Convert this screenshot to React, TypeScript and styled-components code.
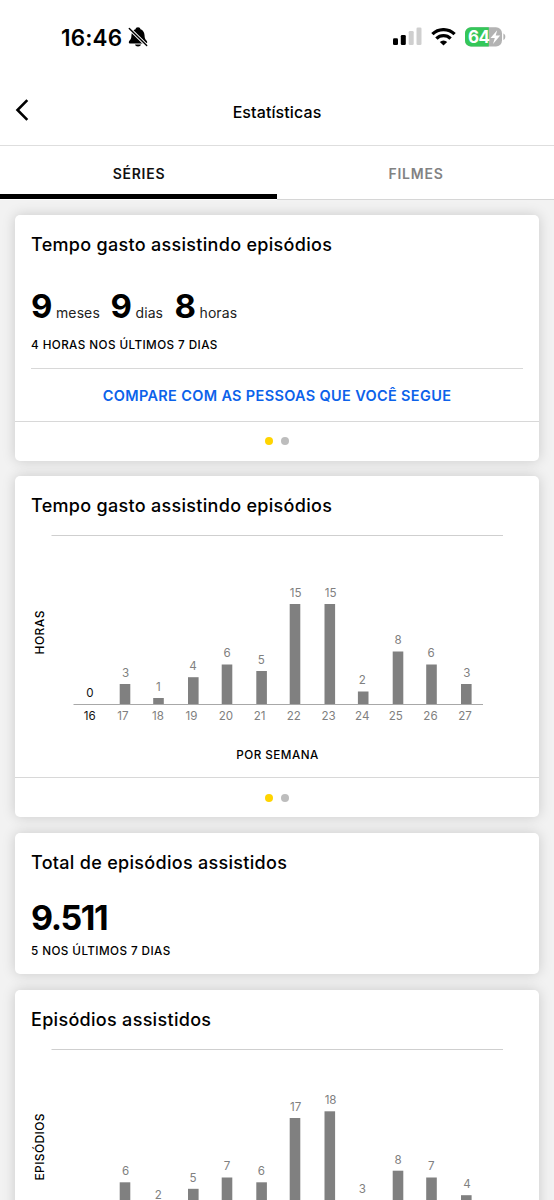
import React from "react";
import styled, { createGlobalStyle } from "styled-components";

const GlobalStyle = createGlobalStyle`
  * { box-sizing: border-box; }
  html, body { margin: 0; padding: 0; background: #fff; }
  body { font-family: Inter, "Liberation Sans", sans-serif; color: #000; }
`;

const Screen = styled.div`
  width: 554px;
  height: 1200px;
  overflow: hidden;
  display: flex;
  flex-direction: column;
  background: #f2f2f2;
`;

const StatusBar = styled.div`
  flex: none;
  height: 78px;
  padding: 0 48px 4px 61px;
  display: flex;
  align-items: center;
  background: #fff;
`;

const Clock = styled.span`
  width: 67px;
  padding-top: 2px;
  font-size: 22.5px;
  font-weight: 600;
  letter-spacing: 0.15px;
  line-height: 30px;
`;

const StatusIcons = styled.div`
  margin-left: auto;
  display: flex;
  align-items: center;
`;

const NavBar = styled.header`
  flex: none;
  height: 68px;
  display: grid;
  grid-template-columns: 60px 1fr 60px;
  align-items: center;
  background: #fff;
  border-bottom: 1px solid #dedede;
`;

const BackButton = styled.button`
  border: 0;
  padding: 0 0 3px 14px;
  background: none;
  display: flex;
`;

const NavTitle = styled.h1`
  margin: 0;
  text-align: center;
  font-size: 16px;
  font-weight: 500;
  letter-spacing: 0.1px;
  line-height: 22px;
`;

const Tabs = styled.nav`
  flex: none;
  height: 54px;
  display: grid;
  grid-template-columns: 1fr 1fr;
  background: #fff;
`;

const Tab = styled.button<{ $active?: boolean }>`
  margin-bottom: ${(p) => (p.$active ? "1px" : "0")};
  border: 0;
  border-bottom: ${(p) => (p.$active ? "5px solid #000" : "1px solid #d6d6d6")};
  padding: ${(p) => (p.$active ? "8px 0 0 1px" : "3px 0 0 1px")};
  background: none;
  font: 600 14px/20px Inter, sans-serif;
  letter-spacing: 0.75px;
  color: ${(p) => (p.$active ? "#111" : "#828282")};
`;

const Feed = styled.main`
  display: flex;
  flex-direction: column;
  gap: 15.5px;
  padding: 15px 15px 0;
`;

const Card = styled.section<{ $height: number }>`
  flex: none;
  height: ${(p) => p.$height}px;
  display: flex;
  flex-direction: column;
  background: #fff;
  border-radius: 5px;
  box-shadow: 0 0 13px rgba(0, 0, 0, 0.17);
`;

const CardTitle = styled.h2`
  flex: none;
  margin: 0;
  padding: 18px 16px 0;
  font-size: 18px;
  font-weight: 500;
  letter-spacing: 0.3px;
  line-height: 24px;
`;

const Totals = styled.div`
  display: flex;
  align-items: baseline;
  padding: 28px 16px 0;
  height: 78px;
`;

const Amount = styled.span`
  width: 20px;
  font-size: 33px;
  font-weight: 700;
  letter-spacing: -1.5px;
  line-height: 42px;
`;

const Unit = styled.span<{ $width: number }>`
  width: ${(p) => p.$width}px;
  padding-left: 5px;
  font-size: 14px;
  letter-spacing: 0.1px;
  color: #222;
`;

const Total = styled.div`
  padding: 21px 16px 1px;
  font-size: 34px;
  font-weight: 700;
  letter-spacing: -1.4px;
  line-height: 44px;
`;

const Recent = styled.div`
  padding: 0 16px;
  font-size: 11.7px;
  font-weight: 500;
  letter-spacing: 0.42px;
  line-height: 20px;
`;

const CompareLink = styled.a`
  margin: 13px 16px 0;
  height: 53px;
  border-top: 1px solid #d8d8d8;
  text-align: center;
  font-size: 14.5px;
  font-weight: 600;
  letter-spacing: 0.33px;
  line-height: 54px;
  color: #0c62ea;
`;

const Pager = styled.div`
  flex: none;
  height: 40px;
  margin-top: auto;
  border-top: 1px solid #d8d8d8;
  display: flex;
  justify-content: center;
  align-items: center;
  gap: 8px;
`;

const Dot = styled.i<{ $active?: boolean }>`
  width: 8px;
  height: 8px;
  border-radius: 50%;
  background: ${(p) => (p.$active ? "#ffd400" : "#bdbdbd")};
`;

const ChartSvg = styled.svg`
  flex: none;
  display: block;
  margin-top: 6px;
  font-family: Inter, sans-serif;
`;

type Bar = { week: number; value: number; height: number };

const columns = [74.8, 110, 143.5, 178.3, 212, 246.6, 280, 314.8, 348.2, 383, 416.5, 451.3];
const valueOffset = [0.2, 0.7, -0.2, -0.3, 0, -0.3, 0.6, 0.8, -0.8, 0, -0.3, 0.6];
const weekOffset = [0, -2, -0.5, -1.8, -1, -2, -1.2, -1.3, -1, -2.2, -1, -1.3];

const hours: Bar[] = [
  { week: 16, value: 0, height: 0 },
  { week: 17, value: 3, height: 20.5 },
  { week: 18, value: 1, height: 6.5 },
  { week: 19, value: 4, height: 27.3 },
  { week: 20, value: 6, height: 40 },
  { week: 21, value: 5, height: 33.5 },
  { week: 22, value: 15, height: 100.5 },
  { week: 23, value: 15, height: 100.5 },
  { week: 24, value: 2, height: 13 },
  { week: 25, value: 8, height: 53 },
  { week: 26, value: 6, height: 40 },
  { week: 27, value: 3, height: 20.5 },
];

const episodes: Bar[] = [
  { week: 17, value: 6, height: 36.2 },
  { week: 18, value: 2, height: 12 },
  { week: 19, value: 5, height: 29.7 },
  { week: 20, value: 7, height: 41 },
  { week: 21, value: 6, height: 36.2 },
  { week: 22, value: 17, height: 100.5 },
  { week: 23, value: 18, height: 107.2 },
  { week: 24, value: 3, height: 18 },
  { week: 25, value: 8, height: 47.8 },
  { week: 26, value: 7, height: 41 },
  { week: 27, value: 4, height: 23.3 },
];

type ChartProps = {
  bars: Bar[];
  axis: string;
  axisLength: number;
  axisCenter: number;
  caption?: string;
};

function Chart({ bars, axis, axisLength, axisCenter, caption }: ChartProps) {
  const base = 180.5;
  return (
    <ChartSvg width="523" height="253" viewBox="0 0 523 253">
      <path d="M36.500 11.500H488" stroke="#cfcfcf" />
      <text
        transform={`translate(29 ${axisCenter}) rotate(-90)`}
        textAnchor="middle"
        fontSize="12"
        fontWeight="500"
        textLength={axisLength}
      >
        {axis}
      </text>
      {bars.map((b) => {
        const i = b.week - 16;
        const top = base - b.height;
        return (
          <g key={b.week} fontSize="11.6" textAnchor="middle" fill={i ? "#808080" : "#111"}>
            <rect x={columns[i] - 5.3} y={top} width="10.6" height={b.height} fill="#808080" />
            <text x={columns[i] + valueOffset[i]} y={top - 7.2}>{b.value}</text>
            {caption && <text x={columns[i] + weekOffset[i]} y="196.3">{b.week}</text>}
          </g>
        );
      })}
      <path d="M58.500 180.500H468" stroke="#a8a8a8" />
      {caption && (
        <text x="262.300" y="235.200" textAnchor="middle" fontSize="11.7" fontWeight="500" textLength="82">
          {caption}
        </text>
      )}
    </ChartSvg>
  );
}

function Dots() {
  return (
    <Pager>
      <Dot $active />
      <Dot />
    </Pager>
  );
}

function BellOff() {
  return (
    <svg width="20" height="20" viewBox="0 0 20 20">
      <path d="M10 .3c-1.500 0-2.300.8-2.500 1.900C5 3 3.700 5.200 3.500 8c-.2 3.500-.7 4.300-1.700 5.300-.7.700-1 1.200-1 1.900 0 .9.600 1.400 1.500 1.400h15.400c.9 0 1.500-.5 1.500-1.400 0-.7-.3-1.200-1-1.900-1-1-1.500-1.800-1.700-5.300-.2-2.800-1.500-5-4-5.800C12.300 1.100 11.500.3 10 .3zM7 17.500h6c-.3 1.200-1.400 2-3 2s-2.700-.8-3-2z" />
      <path d="M1 1.200 19 18.800" stroke="#fff" strokeWidth="3.400" />
      <path d="M1.300 1.500 18.700 18.500" stroke="#000" strokeWidth="1.400" strokeLinecap="round" />
    </svg>
  );
}

function Signal() {
  return (
    <svg width="29" height="20" viewBox="0 0 29 20">
      <rect x="0" y="11.200" width="5" height="6.800" rx="1.300" />
      <rect x="7.800" y="8" width="5" height="10" rx="1.300" />
      <rect x="15.700" y="4" width="5" height="14" rx="1.300" fill="#cfcfcf" />
      <rect x="23.500" y="0.400" width="5" height="17.600" rx="1.300" fill="#cfcfcf" />
    </svg>
  );
}

function Wifi() {
  return (
    <svg width="25" height="18" viewBox="0 0 25 18" fill="none" stroke="#000" strokeWidth="3.300">
      <path d="M1.400 6.200a15.800 15.800 0 0 1 22.200 0" />
      <path d="M5.400 10.600a10 10 0 0 1 14.200 0" />
      <path d="M12.500 17.600 8.800 13.900a5.300 5.300 0 0 1 7.400 0z" fill="#000" stroke="none" />
    </svg>
  );
}

function Battery() {
  return (
    <svg width="41" height="20" viewBox="0 0 41 20">
      <rect x="0" y="0.200" width="37" height="19.300" rx="6" fill="#b3b3b3" />
      <path d="M6 .2h17.800v19.300H6a6 6 0 0 1-6-6V6.200a6 6 0 0 1 6-6z" fill="#34c759" />
      <path d="M38.400 6.600c1.200.4 1.900 1.700 1.900 3.200s-.7 2.800-1.900 3.200z" fill="#b3b3b3" />
      <text x="3" y="15.800" fontFamily="Inter, sans-serif" fontSize="17" fontWeight="700" fill="#fff" textLength="22">
        64
      </text>
      <path d="M32.200 3.200 25.500 11h4.300L28 17l7.200-8.400h-4.500z" fill="#fff" />
    </svg>
  );
}

const SignalSlot = styled.span`
  display: flex;
  margin-right: 9px;
`;

const WifiSlot = styled.span`
  display: flex;
  margin-right: 9px;
`;

export default function App() {
  return (
    <Screen>
      <GlobalStyle />
      <StatusBar>
        <Clock>16:46</Clock>
        <BellOff />
        <StatusIcons>
          <SignalSlot><Signal /></SignalSlot>
          <WifiSlot><Wifi /></WifiSlot>
          <Battery />
        </StatusIcons>
      </StatusBar>
      <NavBar>
        <BackButton aria-label="Voltar">
          <svg width="16" height="24" viewBox="0 0 16 24" fill="none" stroke="#000" strokeWidth="2.600">
            <path d="M13.300 2.200 3.500 12l9.800 9.800" />
          </svg>
        </BackButton>
        <NavTitle>Estatísticas</NavTitle>
      </NavBar>
      <Tabs>
        <Tab $active>SÉRIES</Tab>
        <Tab>FILMES</Tab>
      </Tabs>
      <Feed>
        <Card $height={245.5}>
          <CardTitle>Tempo gasto assistindo episódios</CardTitle>
          <Totals>
            <Amount>9</Amount><Unit $width={59.5}>meses</Unit>
            <Amount>9</Amount><Unit $width={44}>dias</Unit>
            <Amount>8</Amount><Unit $width={60}>horas</Unit>
          </Totals>
          <Recent>4 HORAS NOS ÚLTIMOS 7 DIAS</Recent>
          <CompareLink>COMPARE COM AS PESSOAS QUE VOCÊ SEGUE</CompareLink>
          <Dots />
        </Card>
        <Card $height={341}>
          <CardTitle>Tempo gasto assistindo episódios</CardTitle>
          <Chart bars={hours} axis="HORAS" axisLength={44} axisCenter={108.5} caption="POR SEMANA" />
          <Dots />
        </Card>
        <Card $height={141.5}>
          <CardTitle>Total de episódios assistidos</CardTitle>
          <Total>9.511</Total>
          <Recent>5 NOS ÚLTIMOS 7 DIAS</Recent>
        </Card>
        <Card $height={341}>
          <CardTitle>Episódios assistidos</CardTitle>
          <Chart bars={episodes} axis="EPISÓDIOS" axisLength={67} axisCenter={109} />
          <Dots />
        </Card>
      </Feed>
    </Screen>
  );
}
